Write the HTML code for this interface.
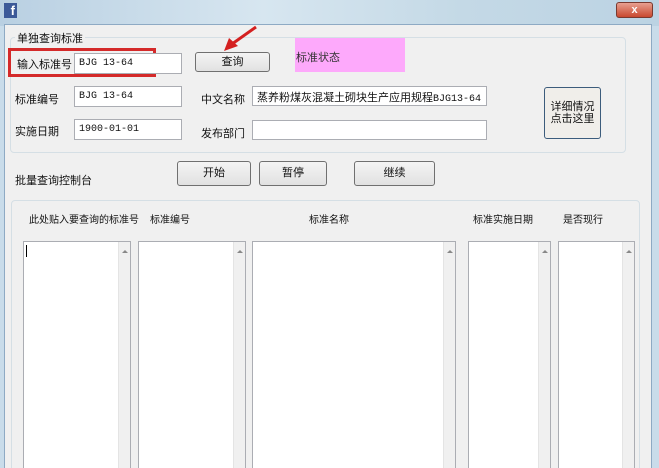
<!DOCTYPE html><html><head><meta charset="utf-8"><style>
*{margin:0;padding:0;box-sizing:border-box}
html,body{width:659px;height:468px;overflow:hidden}
body{position:relative;background:#c9dcea;font-family:"Liberation Sans","Noto Sans CJK SC",sans-serif;font-size:11px;color:#111}
.a{position:absolute;white-space:nowrap}
.tb{background:#fff;border:1px solid #abadb3;font-family:"Liberation Mono","Noto Sans CJK SC",monospace;font-size:10px;padding:4px 0 0 4px;white-space:nowrap;overflow:hidden}
.btn{background:linear-gradient(#f4f4f4,#e1e1e1);border:1px solid #707070;border-radius:3px;text-align:center}
.gb{border:1px solid #d5dfe5;border-radius:4px}
.lb{background:#fff;border:1px solid #abadb3}
.sb{position:absolute;right:0;top:0;bottom:0;width:12px;background:#f0f0f0;border-left:1px solid #e4e4e4}
.sb:before{content:"";position:absolute;left:3px;top:8px;border:3px solid transparent;border-bottom:3px solid #888;border-top:0}
</style></head><body>
<div class="a" style="left:0;top:0;width:659px;height:26px;background:linear-gradient(90deg,#b9d0e2,#d7e6f0 40%,#c4d9e6 70%,#bcd3e3)"></div>
<div class="a" style="left:4px;top:3px;width:13px;height:15px;background:#3b5998;color:#fff;font-weight:bold;font-size:13px;line-height:16px;text-align:right;padding-right:2px">f</div>
<div class="a" style="left:616px;top:2px;width:37px;height:16px;background:linear-gradient(#e8a090,#c9482f);border:1px solid #7a3a30;border-radius:3px;color:#fff;font-weight:bold;font-size:11px;text-align:center;line-height:14px">x</div>
<div class="a" style="left:4px;top:24px;width:648px;height:450px;background:#f0f0f0;border:1px solid #8eaac4"></div>
<div class="a gb" style="left:10px;top:37px;width:616px;height:116px"></div>
<div class="a" style="left:15px;top:30px;background:#f0f0f0;padding:0 2px">单独查询标准</div>
<div class="a" style="left:8px;top:48px;width:148px;height:29px;border:3px solid #d42a2a"></div>
<div class="a" style="left:17px;top:56px">输入标准号</div>
<div class="a tb" style="left:74px;top:53px;width:108px;height:21px">BJG 13-64</div>
<div class="a btn" style="left:195px;top:52px;width:75px;height:20px;line-height:18px">查询</div>
<div class="a" style="left:295px;top:38px;width:110px;height:34px;background:#fda9fb;padding:11px 0 0 1px;color:#333">标准状态</div>
<svg class="a" style="left:220px;top:24px" width="40" height="30"><line x1="36" y1="3" x2="12" y2="20" stroke="#d42020" stroke-width="3"/><polygon points="4,27 9,14 18,22" fill="#d42020"/></svg>
<div class="a" style="left:15px;top:91px">标准编号</div>
<div class="a tb" style="left:74px;top:86px;width:108px;height:21px">BJG 13-64</div>
<div class="a" style="left:201px;top:91px">中文名称</div>
<div class="a tb" style="left:252px;top:86px;width:235px;height:20px;font-family:'Liberation Sans','Noto Sans CJK SC',sans-serif;font-size:11px;padding-top:2px">蒸养粉煤灰混凝土砌块生产应用规程<span style="font-family:'Liberation Mono';font-size:10px">BJG13-64</span></div>
<div class="a" style="left:15px;top:123px">实施日期</div>
<div class="a tb" style="left:74px;top:119px;width:108px;height:21px">1900-01-01</div>
<div class="a" style="left:201px;top:125px">发布部门</div>
<div class="a tb" style="left:252px;top:120px;width:235px;height:20px"></div>
<div class="a btn" style="left:544px;top:87px;width:57px;height:52px;padding-top:13px;line-height:12px;border-color:#3c5c7c;background:#f0eeea">详细情况<br>点击这里</div>
<div class="a" style="left:15px;top:172px">批量查询控制台</div>
<div class="a btn" style="left:177px;top:161px;width:74px;height:25px;line-height:22px">开始</div>
<div class="a btn" style="left:259px;top:161px;width:68px;height:25px;line-height:22px">暂停</div>
<div class="a btn" style="left:354px;top:161px;width:81px;height:25px;line-height:22px">继续</div>
<div class="a gb" style="left:11px;top:200px;width:629px;height:280px"></div>
<div class="a" style="left:29px;top:211px;font-size:10px">此处贴入要查询的标准号</div>
<div class="a" style="left:150px;top:211px;font-size:10px">标准编号</div>
<div class="a" style="left:309px;top:211px;font-size:10px">标准名称</div>
<div class="a" style="left:473px;top:211px;font-size:10px">标准实施日期</div>
<div class="a" style="left:563px;top:211px;font-size:10px">是否现行</div>
<div class="a lb" style="left:23px;top:241px;width:108px;height:230px"><div class="sb"></div><div style="position:absolute;left:2px;top:3px;width:1px;height:12px;background:#000"></div></div>
<div class="a lb" style="left:138px;top:241px;width:108px;height:230px"><div class="sb"></div></div>
<div class="a lb" style="left:252px;top:241px;width:204px;height:230px"><div class="sb"></div></div>
<div class="a lb" style="left:468px;top:241px;width:83px;height:230px"><div class="sb"></div></div>
<div class="a lb" style="left:558px;top:241px;width:77px;height:230px"><div class="sb"></div></div>
</body></html>
